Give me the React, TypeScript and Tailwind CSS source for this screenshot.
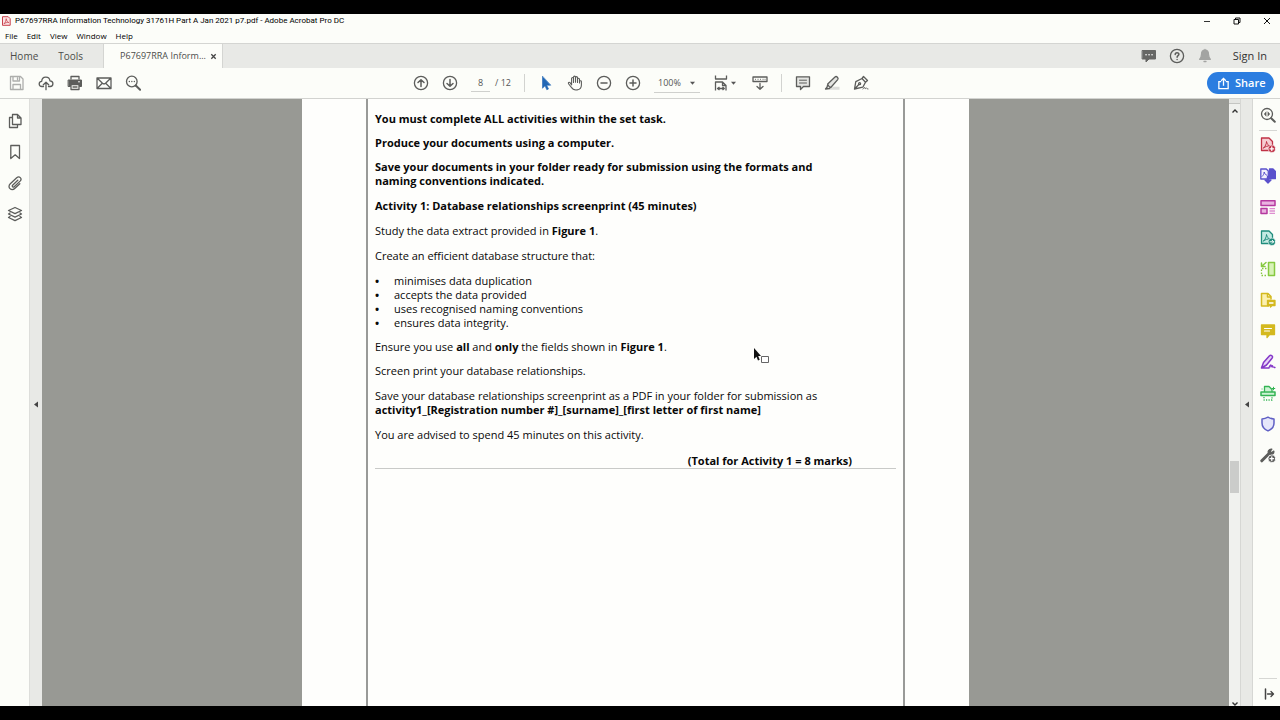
import type { ReactNode } from 'react'

type GlyphProps = { children: ReactNode; className?: string }

function Glyph({ children, className = 'text-[#5c5d5b]' }: GlyphProps) {
  return (
    <svg viewBox="0 0 16 16" className={`size-4 shrink-0 ${className}`} fill="none" stroke="currentColor" strokeWidth="1.3" strokeLinecap="round" strokeLinejoin="round" aria-hidden="true">
      {children}
    </svg>
  )
}

function IconButton({ label, children, className }: GlyphProps & { label: string }) {
  return (
    <button type="button" aria-label={label} className="flex shrink-0 items-center justify-center">
      <Glyph className={className}>{children}</Glyph>
    </button>
  )
}

function TitleBar() {
  return (
    <header className="flex h-[14px] shrink-0 items-center justify-between pr-[9px] pl-px">
      <div className="flex items-center gap-1">
        <svg viewBox="0 0 10 10" className="size-[10px] text-[#c8414c]" fill="none" stroke="currentColor" aria-hidden="true">
          <path d="M1.5.7h5.7l2 2v6.600H1.500z" fill="#fbe3e3" strokeWidth="1" />
          <path d="M3 7.700c1.300-1 2.100-3.300 2.200-5 .4 2.200 1.300 3.400 2.600 3.800-1.700-.2-3.300.2-4.800 1.200z" strokeWidth=".8" />
        </svg>
        <span className="font-['Roboto',sans-serif] text-[8px] leading-[14px] text-black">P67697RRA Information Technology 31761H Part A Jan 2021 p7.pdf - Adobe Acrobat Pro DC</span>
      </div>
      <div className="flex items-center gap-[22px]">
        <button type="button" aria-label="Minimise">
          <svg viewBox="0 0 8 8" className="size-2" stroke="#333" aria-hidden="true"><path d="M1 4.500h6" /></svg>
        </button>
        <button type="button" aria-label="Restore">
          <svg viewBox="0 0 8 8" className="size-2" fill="none" stroke="#111" aria-hidden="true"><path d="M1 2.500h4.500V7H1zM2.500 2.500V1H7v4.500H5.500" /></svg>
        </button>
        <button type="button" aria-label="Close">
          <svg viewBox="0 0 8 8" className="size-2" fill="none" stroke="#111" aria-hidden="true"><path d="M1 1l6 6M7 1L1 7" /></svg>
        </button>
      </div>
    </header>
  )
}

const menus = ['File', 'Edit', 'View', 'Window', 'Help']

function MenuBar() {
  return (
    <nav className="flex h-[15px] shrink-0 items-center gap-[9px] pl-[5px] text-[8px] leading-[14px] text-black">
      {menus.map((menu) => (
        <button key={menu} type="button">{menu}</button>
      ))}
    </nav>
  )
}

function TabBar() {
  return (
    <div className="flex h-[25px] shrink-0 items-stretch border-t border-[#d4d5d2] bg-[#e8e9e6] text-[10px] text-[#4b4c4a]">
      <button type="button" className="pl-[10px]">Home</button>
      <button type="button" className="px-5">Tools</button>
      <div className="flex w-[120px] items-center justify-between border-x border-[#d4d5d2] bg-[#fcfdf9] pr-[5px] pl-4 text-[9px]">
        <button type="button" className="whitespace-nowrap">P67697RRA Inform...</button>
        <button type="button" aria-label="Close tab">
          <svg viewBox="0 0 8 8" className="size-[7px]" stroke="#444" strokeWidth="1.500" aria-hidden="true"><path d="M1.500 1.500l5 5M6.500 1.500l-5 5" /></svg>
        </button>
      </div>
      <div className="ml-auto flex items-center gap-3 pr-[13px]">
        <IconButton label="Comments" className="text-[#666765]">
          <path d="M1.500 2.500h13v8.500H8l-3 3v-3H1.500z" fill="currentColor" strokeWidth="1" />
          <path d="M5 6.700h.1M8 6.700h.1M11 6.700h.1" stroke="#fff" strokeWidth="1.500" />
        </IconButton>
        <IconButton label="Help">
          <circle cx="8" cy="8" r="6.600" />
          <path d="M6.200 6.500c0-2.300 3.700-2.300 3.700-.2 0 1.300-1.800 1.400-1.800 2.900M8.100 11.400v.1" strokeWidth="1.500" />
        </IconButton>
        <IconButton label="Notifications" className="text-[#a3a4a2]">
          <path d="M8 2c-2.500.3-3.500 2-3.500 4.500 0 2.500-.8 3.500-1.900 4.800h10.800c-1.100-1.300-1.900-2.300-1.900-4.800C11.500 4 10.500 2.300 8 2zM7 13.500h2M8 1.500v.5" fill="currentColor" />
        </IconButton>
        <button type="button" className="ml-2 text-[11px] text-[#333]">Sign In</button>
      </div>
    </div>
  )
}

function Caret() {
  return (
    <svg viewBox="0 0 6 4" className="h-1 w-[5px] shrink-0" fill="#555" aria-hidden="true"><path d="M0 .5h6L3 4z" /></svg>
  )
}

function Toolbar() {
  return (
    <div className="grid h-[31px] shrink-0 grid-cols-[1fr_auto_1fr] items-center border-b border-[#d2d3d0]">
      <div className="flex items-center gap-[13px] pl-[9px]">
        <IconButton label="Save" className="text-[#adaeac]">
          <path d="M1.500 1.500h10l2.500 2.500v10.500H1.500zM4 1.500V6h6.500V1.500M8.500 3v1.500M4 14.500V9.500h7.500v5" />
        </IconButton>
        <IconButton label="Upload">
          <path d="M5.500 11.500H4C.3 11.300.3 6.600 3.700 6.300 4 .8 11.300.8 12 5.800c4 .3 3.700 5.600.2 5.700h-1.700M8 14.700V7.500M5.300 9.800L8 7.200l2.700 2.600" />
        </IconButton>
        <IconButton label="Print">
          <path d="M4 4V1.500h8V4" />
          <path d="M1.500 5h13v6.500h-2v-2h-9v2h-2z" fill="currentColor" strokeWidth="1" />
          <path d="M4 9.500h8v5H4z" fill="#fcfdf9" />
          <path d="M6 12h4" />
          <path d="M11.500 6.800h1" stroke="#fff" strokeWidth="1" />
        </IconButton>
        <IconButton label="Email">
          <path d="M1 3h14v10.500H1zM1.300 3.300L6.500 8.200c1 .9 2 .9 3 0l5.200-4.900M1.300 13.200l4.500-4.500M14.700 13.200l-4.500-4.500" />
        </IconButton>
        <IconButton label="Find">
          <circle cx="6.800" cy="6.500" r="5.300" />
          <path d="M10.800 10.500l4.300 4.300" strokeWidth="2" />
          <path d="M4.300 6.500h.1M6.800 6.500h.1M9.300 6.500h.1" />
        </IconButton>
      </div>

      <div className="flex items-center gap-[13px] pl-0.5">
        <IconButton label="Previous page">
          <circle cx="8" cy="8" r="6.600" />
          <path d="M8 11.500V5M5 7.500L8 4.700l3 2.800" strokeWidth="1.500" />
        </IconButton>
        <IconButton label="Next page">
          <circle cx="8" cy="8" r="6.600" />
          <path d="M8 4.500V11M5 8.500l3 2.800 3-2.800" strokeWidth="1.500" />
        </IconButton>
        <label className="flex items-center gap-[5px] text-[9px] text-[#555]">
          <input aria-label="Page number" defaultValue="8" className="h-[18px] w-[19px] border-b border-[#cfd0cd] bg-transparent text-center" />
          <span className="w-4 whitespace-nowrap">/ 12</span>
        </label>
        <span className="h-[18px] w-px bg-[#d2d3d0]" />
        <IconButton label="Select tool" className="text-[#2167b5]">
          <path d="M4.500 1.500v11.800L7 10.800l1.800 4 1.700-.8-1.800-3.800h3.800z" fill="currentColor" strokeWidth=".6" />
        </IconButton>
        <IconButton label="Hand tool">
          <path d="M4.600 9.800V3.600c0-1.400 1.900-1.400 1.900 0V7.500M6.500 7V2.200c0-1.400 2-1.400 2 0V7.200M8.500 7V2.700c0-1.400 2-1.400 2 0v4.800M10.500 7.300V4.300c0-1.400 2-1.300 2 0V7M12.500 8V6.600c0-1.200 1.900-1.200 1.900 0V10c0 6-7.900 6.300-10 2.300L1.700 9C.8 7.600 2.200 6.800 3 7.700l1.600 2.100" strokeWidth="1.100" />
        </IconButton>
        <IconButton label="Zoom out">
          <circle cx="8" cy="8" r="6.600" />
          <path d="M5 8h6" strokeWidth="1.500" />
        </IconButton>
        <IconButton label="Zoom in">
          <circle cx="8" cy="8" r="6.600" />
          <path d="M5 8h6M8 5v6" strokeWidth="1.500" />
        </IconButton>
        <div className="flex h-[19px] w-[46px] items-center border-b border-[#cfd0cd] pr-[5px] pl-1">
          <select aria-label="Zoom level" className="min-w-0 flex-1 appearance-none bg-transparent text-[9px] text-[#555]">
            <option>100%</option>
          </select>
          <Caret />
        </div>
        <button type="button" aria-label="Fit page" className="flex w-[26px] items-center gap-0.5">
          <Glyph>
            <path d="M2.500.5v3.500h11V.5" strokeLinecap="butt" />
            <path d="M2.500 15.500V7h7l3.500 3.500v5M9.500 7v3.500H13M4.500 13.500h6.500M6.500 12l-2 1.500 2 1.500M9.500 12l1.800 1.500-1.800 1.500" strokeLinecap="butt" />
          </Glyph>
          <Caret />
        </button>
        <IconButton label="Scroll mode">
          <path d="M1 2h14v4.500H1z" />
          <path d="M3.500 4.300h.1M6 4.300h.1M8.500 4.300h.1M11 4.300h.1M13 4.300h.1" strokeWidth="1" />
          <path d="M8 8.500V14M5 11.500l3 2.800 3-2.800" />
        </IconButton>
        <span className="h-[18px] w-px bg-[#d2d3d0]" />
        <IconButton label="Add comment">
          <path d="M1.500 1.800h13v9.700H8.500l-3 3v-3h-4z" fill="#e4e5e2" />
          <path d="M4.500 5.200h7M4.500 8h7" strokeWidth="1" />
        </IconButton>
        <IconButton label="Highlight">
          <path d="M5 14.800h10.500v-3H9z" fill="#dcddda" stroke="none" />
          <path d="M3.700 9L11 2c1.500-1.300 4 .9 2.700 2.600L7 12.300c-1.200.3-3-1.600-3.300-3.300zM3.700 9.800l-.7 2.500L1.500 14l4-.5 1-1.200" fill="#e4e5e2" />
        </IconButton>
        <IconButton label="Sign">
          <path d="M1.500 14l1.300-7.300L9 3.500l3.500 3.700-2.700 5L1.500 14zM1.800 13.700l4-4.200M9 3.500l1.500-2 4 4-2 1.700" />
          <circle cx="6.600" cy="8.700" r="1" />
          <path d="M10 14c1-1.500 2-2.200 2-.8s.8-.2 1.300-.2c.6 0 .6 1 1.700 1" strokeWidth="1" />
        </IconButton>
      </div>

      <button type="button" className="mr-[6px] flex h-[22px] w-[67px] items-center gap-[5px] justify-self-end rounded-full bg-[#2b7de0] pl-[10px] text-[11px] font-semibold text-white">
        <svg viewBox="0 0 14 14" className="size-[13px]" fill="none" stroke="currentColor" strokeWidth="1.400" aria-hidden="true">
          <path d="M4.500 5H2v7.500h10V5H9.500M7 9.500V1.500M4.500 4L7 1.500 9.500 4" />
        </svg>
        Share
      </button>
    </div>
  )
}

function LeftRail() {
  return (
    <aside className="flex shrink-0">
      <div className="flex w-[29px] flex-col items-center gap-[15px] pt-[14px]">
        <IconButton label="Page thumbnails">
          <path d="M5.500 1.500h5l3.500 3.500v6.500H5.500zM10.500 1.500V5H14M5.500 4.500H2.500v10h8v-3" />
        </IconButton>
        <IconButton label="Bookmarks">
          <path d="M3.800 1.500h8.700v13L8.200 10.800l-4.400 3.700z" />
        </IconButton>
        <IconButton label="Attachments">
          <path d="M10.800 5.200l-5.200 5c-1 1.200.5 2.500 1.600 1.500l5.900-5.600c2.400-2.500-.8-5.700-3.400-3.300L3.300 8.700c-3.600 3.600 1.200 8 4.700 4.600l4.800-4.600" />
        </IconButton>
        <IconButton label="Layers">
          <path d="M8 1.500l6.500 3L8 7.700 1.500 4.500zM3 7L1.500 8 8 11.200 14.500 8 13 7M3 10.500l-1.500 1L8 14.700l6.500-3.200-1.500-1" />
        </IconButton>
      </div>
      <button type="button" aria-label="Toggle navigation pane" className="flex w-[13px] items-center justify-center border-l border-[#dddedb] bg-[#e8e9e6] pt-1">
        <svg viewBox="0 0 4 6" className="h-[7px] w-1" fill="#444" aria-hidden="true"><path d="M4 0v6L0 3z" /></svg>
      </button>
    </aside>
  )
}

const requirements = [
  'minimises data duplication',
  'accepts the data provided',
  'uses recognised naming conventions',
  'ensures data integrity.',
]

function Pointer() {
  return (
    <svg viewBox="0 0 17 17" className="absolute top-[249px] left-[385px] size-[17px]" aria-hidden="true">
      <path d="M1 0v11l2.500-2.300L5 12.500l1.700-.8L5.200 8H8z" fill="#111" />
      <path d="M8.500 8.500h7v6h-7z" fill="#fff" stroke="#666" />
    </svg>
  )
}

function DocumentPage() {
  return (
    <article className="w-[667px] shrink-0 bg-[#fefefc] px-16">
      <div className="relative h-full border-x-2 border-[#999a98] px-[7px] pt-[13px] text-[11px] leading-[14px] whitespace-nowrap text-[#080808]">
        <div className="flex flex-col gap-[10px] font-bold">
          <p>You must complete ALL activities within the set task.</p>
          <p>Produce your documents using a computer.</p>
          <p>
            Save your documents in your folder ready for submission using the formats and
            <br />
            naming conventions indicated.
          </p>
        </div>
        <div className="mt-[11px] flex flex-col gap-[11px]">
          <h2 className="font-bold">Activity 1: Database relationships screenprint (45 minutes)</h2>
          <p>Study the data extract provided in <b>Figure 1</b>.</p>
          <p>Create an efficient database structure that:</p>
          <ul>
            {requirements.map((item) => (
              <li key={item} className="flex">
                <span className="w-[19px] font-bold">•</span>
                {item}
              </li>
            ))}
          </ul>
        </div>
        <div className="mt-[10px] flex flex-col gap-[10px]">
          <p>Ensure you use <b>all</b> and <b>only</b> the fields shown in <b>Figure 1</b>.</p>
          <p>Screen print your database relationships.</p>
        </div>
        <div className="mt-[11px] flex flex-col gap-[11px]">
          <p>
            Save your database relationships screenprint as a PDF in your folder for submission as
            <br />
            <b>activity1_[Registration number #]_[surname]_[first letter of first name]</b>
          </p>
          <p>You are advised to spend 45 minutes on this activity.</p>
        </div>
        <p className="mt-3 border-b border-[#c9cac8] pr-11 text-right font-bold">(Total for Activity 1 = 8 marks)</p>
        <Pointer />
      </div>
    </article>
  )
}

function ScrollBar() {
  return (
    <div className="flex w-[11px] shrink-0 flex-col items-center bg-[#f0f1ee]">
      <span className="h-[5px] w-full border-b border-[#c4c5c2] bg-[#e4e5e2]" />
      <svg viewBox="0 0 6 4" className="mt-[5px] h-1 w-[6px]" fill="none" stroke="#333" strokeWidth="1.400" aria-hidden="true"><path d="M.5 3.500L3 1l2.500 2.500" /></svg>
      <div className="flex w-full flex-1 flex-col px-px">
        <span className="flex-[347]" />
        <span className="h-8 bg-[#cbccca]" />
        <span className="flex-[208]" />
      </div>
      <svg viewBox="0 0 6 4" className="h-1 w-[6px]" fill="none" stroke="#333" strokeWidth="1.400" aria-hidden="true"><path d="M.5.5L3 3 5.500.5" /></svg>
    </div>
  )
}

const pdfMark = 'M3.500 11c1.800-1.500 3-4.300 3-6.500.5 2.500 1.700 4 3.500 4.500-2.300-.3-4.500.5-6.500 2z'

function RightRail() {
  return (
    <aside className="flex shrink-0">
      <button type="button" aria-label="Toggle tools pane" className="flex w-[13px] items-center justify-center border-x border-[#d6d7d4] bg-[#e8e9e6] pt-1">
        <svg viewBox="0 0 4 6" className="h-[7px] w-1" fill="#444" aria-hidden="true"><path d="M4 0v6L0 3z" /></svg>
      </button>
      <div className="flex w-[27px] flex-col items-center pt-2 pl-[3px]">
        <IconButton label="Search tools">
          <circle cx="7" cy="7" r="5.500" />
          <path d="M11.200 11.200l3.600 3.600" strokeWidth="2" />
          <path d="M6 5L4.200 7 6 9zM8 5l1.800 2L8 9z" fill="currentColor" strokeWidth=".5" />
        </IconButton>
        <span className="mt-[7px] mb-[6px] h-px w-[18px] bg-[#d6d7d4]" />
        <div className="flex flex-col gap-[15px]">
          <IconButton label="Create PDF" className="text-[#c03246]">
            <path d="M1.500 1h7.500l3.500 3.500v9h-11z" fill="#f6cdd2" />
            <path d={pdfMark} strokeWidth="1" />
            <circle cx="11.800" cy="11.800" r="3.700" fill="currentColor" stroke="#fff" strokeWidth=".6" />
            <path d="M10 11.800h3.600M11.800 10v3.600" stroke="#fff" />
          </IconButton>
          <IconButton label="Combine files" className="text-[#5a50cc]">
            <path d="M9.500 1h3.500l2.500 2.500v7h-6z" fill="currentColor" />
            <path d="M.8 1h5.500l2 2v8H.8z" fill="#f0eefc" />
            <path d="M2 8.500c1.300-1 2.200-3 2.200-4.500.4 1.800 1.300 2.800 2.600 3.200" strokeWidth="1" />
            <path d="M8 9v3" strokeWidth="2.500" />
            <path d="M5 12h6L8 15z" fill="currentColor" />
          </IconButton>
          <IconButton label="Organize pages" className="text-[#b5399f]">
            <path d="M1 1.800h14v4.700H1zM1 9.500h6v5H1z" fill="#eab3e0" strokeWidth="1.500" />
            <path d="M9.500 9.700H15M9.500 12H15M9.500 14.300H15" stroke="#dd8fd0" strokeLinecap="butt" />
          </IconButton>
          <IconButton label="Export PDF" className="text-[#1f8c7c]">
            <path d="M1.500 1h7.500l3.500 3.500v9h-11z" fill="#c3eae2" />
            <path d={pdfMark} strokeWidth="1" />
            <circle cx="11.800" cy="11.800" r="3.700" fill="currentColor" stroke="#fff" strokeWidth=".6" />
            <path d="M10 11.800h3.500M12.200 10.300l1.500 1.500-1.500 1.500" stroke="#fff" strokeWidth="1" />
          </IconButton>
          <IconButton label="Compress" className="text-[#86c940]">
            <path d="M8.500 1.500h6v13h-6z" fill="#d8f2b8" strokeWidth="1.500" />
            <path d="M6.500 7.500h-5v7h5" strokeDasharray="1.500 1.500" strokeLinecap="butt" />
            <path d="M6 1.500L2 5M1.500 2v3.500H5" strokeWidth="1.500" />
          </IconButton>
          <IconButton label="Review" className="text-[#d4b91f]">
            <path d="M8.500 14H1.500V1.500H8L11 4.500V7M7.500 1.500V5H11" fill="#fbf0b0" strokeWidth="1.500" />
            <path d="M7.500 8.500H15V13.500h-3l-1.500 1.500v-1.500h-3z" fill="currentColor" />
            <path d="M9.500 11h3.500" stroke="#fff" />
          </IconButton>
          <IconButton label="Comment" className="text-[#d4b91f]">
            <path d="M1.500 2h13v9.500H9.500L7 14.500v-3H1.500z" fill="currentColor" />
            <path d="M4.500 5.500h7M4.500 8h5" stroke="#fff" strokeWidth="1.200" />
          </IconButton>
          <IconButton label="Fill and sign" className="text-[#8438c8]">
            <path d="M1.500 14l2-5.500L9.300 2c1.700-1.700 4.200.3 2.700 2.300L6.500 11 1.500 14h7.500" fill="#e8d3f8" strokeWidth="1.500" />
            <path d="M9 13.500c1.500-3.500 2.500-3 2-.5 1.300-2 1.700-1.500 1.700 0 1-.7 1.300.6 2.300.5" />
          </IconButton>
          <IconButton label="Scan" className="text-[#34b454]">
            <path d="M4.500 6.500V1.500h4.500l3 3v2" fill="#cdf3d4" />
            <path d="M1 7h14v3.500H1z" fill="#cdf3d4" strokeWidth="1.500" />
            <path d="M4 12v3h8v-3" strokeDasharray="1.200 1.300" strokeLinecap="butt" />
            <path d="M13.500 2.200v2.600M12.200 3.500h2.600M2 4h.1" strokeWidth="1" />
          </IconButton>
          <IconButton label="Protect" className="text-[#5f5fc4]">
            <path d="M8 1.200c2 1.200 4 1.700 6 1.700v4c0 4-2.500 6.500-6 8-3.500-1.500-6-4-6-8v-4c2 0 4-.5 6-1.700z" fill="#e6e6fa" strokeWidth="1.500" />
          </IconButton>
          <IconButton label="More tools">
            <path d="M1.800 13.800l6.500-6.500" strokeWidth="3" />
            <path d="M9 6.800c-2-2.200 0-5 2.800-4.600L10 4.200l1.500 1.600 2.300-1.700c.5 2.700-2.200 4.500-4.800 2.700z" fill="currentColor" />
            <circle cx="11.800" cy="11.700" r="3.800" fill="currentColor" stroke="#fff" strokeWidth=".8" />
            <path d="M10 11.700h3.600M11.800 9.900v3.600" stroke="#fff" />
          </IconButton>
        </div>
        <span className="mt-auto mb-[7px] h-px w-[18px] bg-[#d6d7d4]" />
        <span className="mb-1 flex">
          <IconButton label="Collapse pane" className="text-[#444]">
            <path d="M5.500 3v10" strokeWidth="1.500" />
            <path d="M7.500 8H13M11 5.500L13.500 8 11 10.500" />
          </IconButton>
        </span>
      </div>
    </aside>
  )
}

export default function App() {
  return (
    <div className="h-screen bg-black py-[14px] font-['Open_Sans',sans-serif]">
      <div className="flex h-full flex-col overflow-hidden bg-[#fcfdf9]">
        <TitleBar />
        <MenuBar />
        <TabBar />
        <Toolbar />
        <div className="flex min-h-0 flex-1">
          <LeftRail />
          <main className="flex min-w-0 flex-1 justify-center overflow-hidden bg-[#989994]">
            <DocumentPage />
          </main>
          <ScrollBar />
          <RightRail />
        </div>
      </div>
    </div>
  )
}
